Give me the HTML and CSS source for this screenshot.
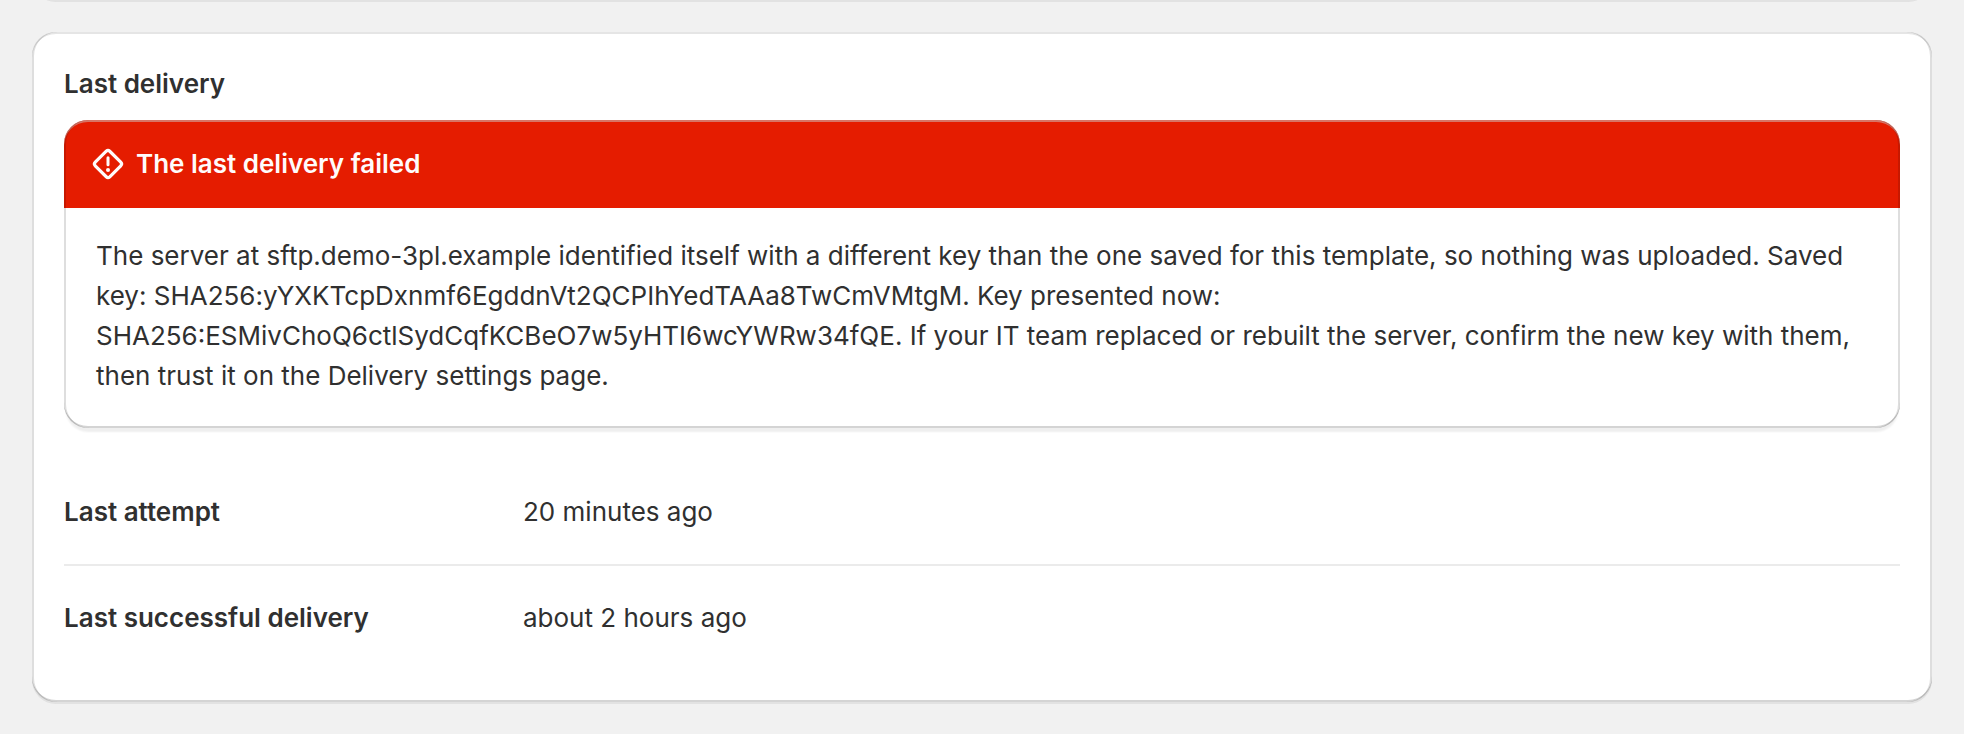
FILE: index.html
```html
<!DOCTYPE html>
<html lang="en">
<head>
  <meta charset="UTF-8">
  <meta name="viewport" content="width=device-width, initial-scale=1.0">
  <title>Last delivery</title>
  <link rel="stylesheet" href="styles.css">
</head>
<body>
  <main class="page">
    <!-- end of the card above, scrolled out of view -->
    <div class="card card-scrolled"></div>

    <section class="card">
      <h2 class="card-title">Last delivery</h2>

      <div class="banner" role="alert">
        <div class="banner-header">
          <svg class="banner-icon" viewBox="0 0 20 20" fill="none" aria-hidden="true">
            <path d="M9.12 3.62a1.25 1.25 0 0 1 1.76 0l5.5 5.5a1.25 1.25 0 0 1 0 1.76l-5.5 5.5a1.25 1.25 0 0 1-1.76 0l-5.5-5.5a1.25 1.25 0 0 1 0-1.76z" stroke="currentColor" stroke-width="1.6"/>
            <path d="M10 6.9v3.5" stroke="currentColor" stroke-width="1.5" stroke-linecap="round"/>
            <circle cx="10" cy="13" r="1" fill="currentColor"/>
          </svg>
          <h3 class="banner-title">The last delivery failed</h3>
        </div>
        <p class="banner-body">The server at sftp.demo-3pl.example identified itself with a different key than the one saved for this template, so nothing was uploaded. Saved key: SHA256:yYXKTcpDxnmf6EgddnVt2QCPIhYedTAAa8TwCmVMtgM. Key presented now: SHA256:ESMivChoQ6ctlSydCqfKCBeO7w5yHTI6wcYWRw34fQE. If your IT team replaced or rebuilt the server, confirm the new key with them, then trust it on the Delivery settings page.</p>
      </div>

      <dl class="details">
        <div class="details-row">
          <dt>Last attempt</dt>
          <dd>20 minutes ago</dd>
        </div>
        <div class="details-row">
          <dt>Last successful delivery</dt>
          <dd>about 2 hours ago</dd>
        </div>
      </dl>
    </section>
  </main>
</body>
</html>
```
FILE: styles.css
```css
* {
  box-sizing: border-box;
}

body {
  margin: 0;
  min-height: 100vh;
  background: #f1f1f1;
  color: #303030;
  font-family: Inter, "Liberation Sans", sans-serif;
  font-size: 26px;
  line-height: 40px;
}

h2, h3, p, dl, dd {
  margin: 0;
}

h2, h3, dt {
  font-size: 26px;
  font-weight: 600;
}

.page {
  display: flow-root;
  padding: 0 32px 32px;
}

.card,
.banner {
  position: relative;
  border-radius: 24px;
  background: #fff;
}

.card {
  padding: 32px;
  box-shadow: 0 2px 0 rgba(26, 26, 26, 0.07);
}

.card-scrolled {
  margin: -64px 0 32px;
}

/* bevel, drawn over the content so it also tints the banner header */
.card::after,
.banner::after {
  content: "";
  position: absolute;
  inset: 0;
  border-radius: inherit;
  pointer-events: none;
  box-shadow:
    inset 2px 0 0 rgba(0, 0, 0, 0.13),
    inset -2px 0 0 rgba(0, 0, 0, 0.13),
    inset 0 -2px 0 rgba(0, 0, 0, 0.17),
    inset 0 2px 0 rgba(204, 204, 204, 0.5);
}

.banner {
  margin-top: 16px;
  box-shadow: 0 6px 2px -2px rgba(26, 26, 26, 0.07);
}

.banner-header {
  display: flex;
  align-items: center;
  gap: 8px;
  padding: 24px;
  border-radius: 24px 24px 0 0;
  background: #e51c00;
  color: #fffbfb;
}

.banner-icon {
  flex: none;
  width: 40px;
  height: 40px;
}

.banner-body {
  padding: 28px 32px 32px;
}

.details {
  margin-top: 32px;
}

.details-row {
  display: grid;
  grid-template-columns: 25% 1fr;
  padding: 32px 0;
}

.details-row + .details-row {
  border-top: 2px solid #ebebeb;
}
```
